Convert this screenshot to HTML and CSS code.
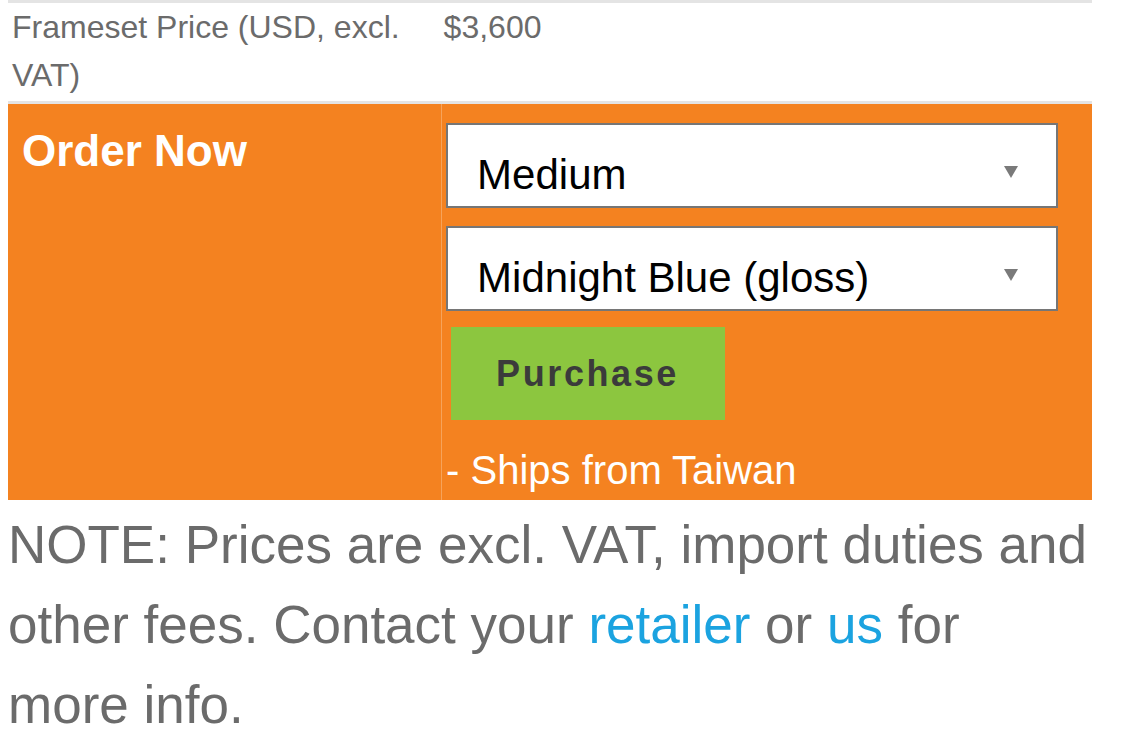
FILE: index.html
```html
<!DOCTYPE html>
<html lang="en">
<head>
  <meta charset="UTF-8">
  <title>Frameset Order</title>
  <link rel="stylesheet" href="styles.css">
</head>
<body>
  <table class="spec-table">
    <tr>
      <td class="spec-label">Frameset Price (USD, excl. VAT)</td>
      <td class="spec-value">$3,600</td>
    </tr>
    <tr class="order-row">
      <th class="order-title">Order Now</th>
      <td class="order-form">
        <div class="select-wrap">
          <select class="order-select">
            <option>Small</option>
            <option selected>Medium</option>
            <option>Large</option>
          </select>
        </div>
        <div class="select-wrap">
          <select class="order-select">
            <option selected>Midnight Blue (gloss)</option>
            <option>Raw Carbon (matte)</option>
          </select>
        </div>
        <button class="buy-btn">Purchase</button>
        <p class="ships">- Ships from Taiwan</p>
      </td>
    </tr>
  </table>

  <p class="note">NOTE: Prices are excl. VAT, import duties and other fees. Contact your <a href="#">retailer</a> or <a href="#">us</a> for more info.</p>
</body>
</html>
```

FILE: styles.css
```css
body {
  font-family: "Liberation Sans", Arial, Helvetica, sans-serif;
  margin: 0 32px 0 8px;
  background: #fff;
  color: #6b6b6b;
}
.spec-table {
  width: 100%;
  border-collapse: collapse;
}
.spec-table td,
.spec-table th {
  border-top: 3px solid #e4e4e4;
  vertical-align: top;
  text-align: left;
}
.spec-label {
  width: 40%;
  font-size: 32px;
  line-height: 48px;
  padding: 0 4px 2px 4px;
}
.spec-value {
  font-size: 32px;
  line-height: 48px;
  padding: 0 2px 2px 2px;
}
.order-row {
  background: #f48220;
}
.order-title {
  color: #fff;
  font-size: 44px;
  font-weight: bold;
  line-height: 48px;
  padding: 23px 14px;
}
.order-form {
  border-left: 1px solid #f6a35a;
  padding: 19px 4px 7px 4px;
}
.select-wrap {
  position: relative;
  width: 95.4%;
  margin-bottom: 18px;
}
.select-wrap::after {
  content: "";
  position: absolute;
  top: 43px;
  right: 40px;
  border-left: 7px solid transparent;
  border-right: 7px solid transparent;
  border-top: 12px solid #7a7a7a;
  pointer-events: none;
}
.order-select {
  -webkit-appearance: none;
  appearance: none;
  display: block;
  width: 100%;
  height: 85px;
  box-sizing: border-box;
  border: 2px solid #767676;
  border-radius: 0;
  background: #fff;
  color: #000;
  font-family: "Liberation Sans", Arial, sans-serif;
  font-size: 42px;
  padding: 18px 60px 0 29px;
}
.buy-btn {
  display: block;
  width: 274px;
  height: 93px;
  margin: -2px 0 0 5px;
  padding: 0 0 0 45px;
  text-align: left;
  background: #8cc63f;
  border: none;
  border-radius: 0;
  color: #3b3b3b;
  font-family: "Liberation Sans", Arial, sans-serif;
  font-size: 36px;
  font-weight: bold;
  letter-spacing: 2.6px;
  cursor: pointer;
}
.ships {
  margin: 27px 0 0 0;
  color: #fff;
  font-size: 40px;
  line-height: 46px;
}
.note {
  margin: 5px 0 0 0;
  font-size: 53px;
  line-height: 80px;
}
.note a {
  color: #1ba3e0;
  text-decoration: none;
}
```
